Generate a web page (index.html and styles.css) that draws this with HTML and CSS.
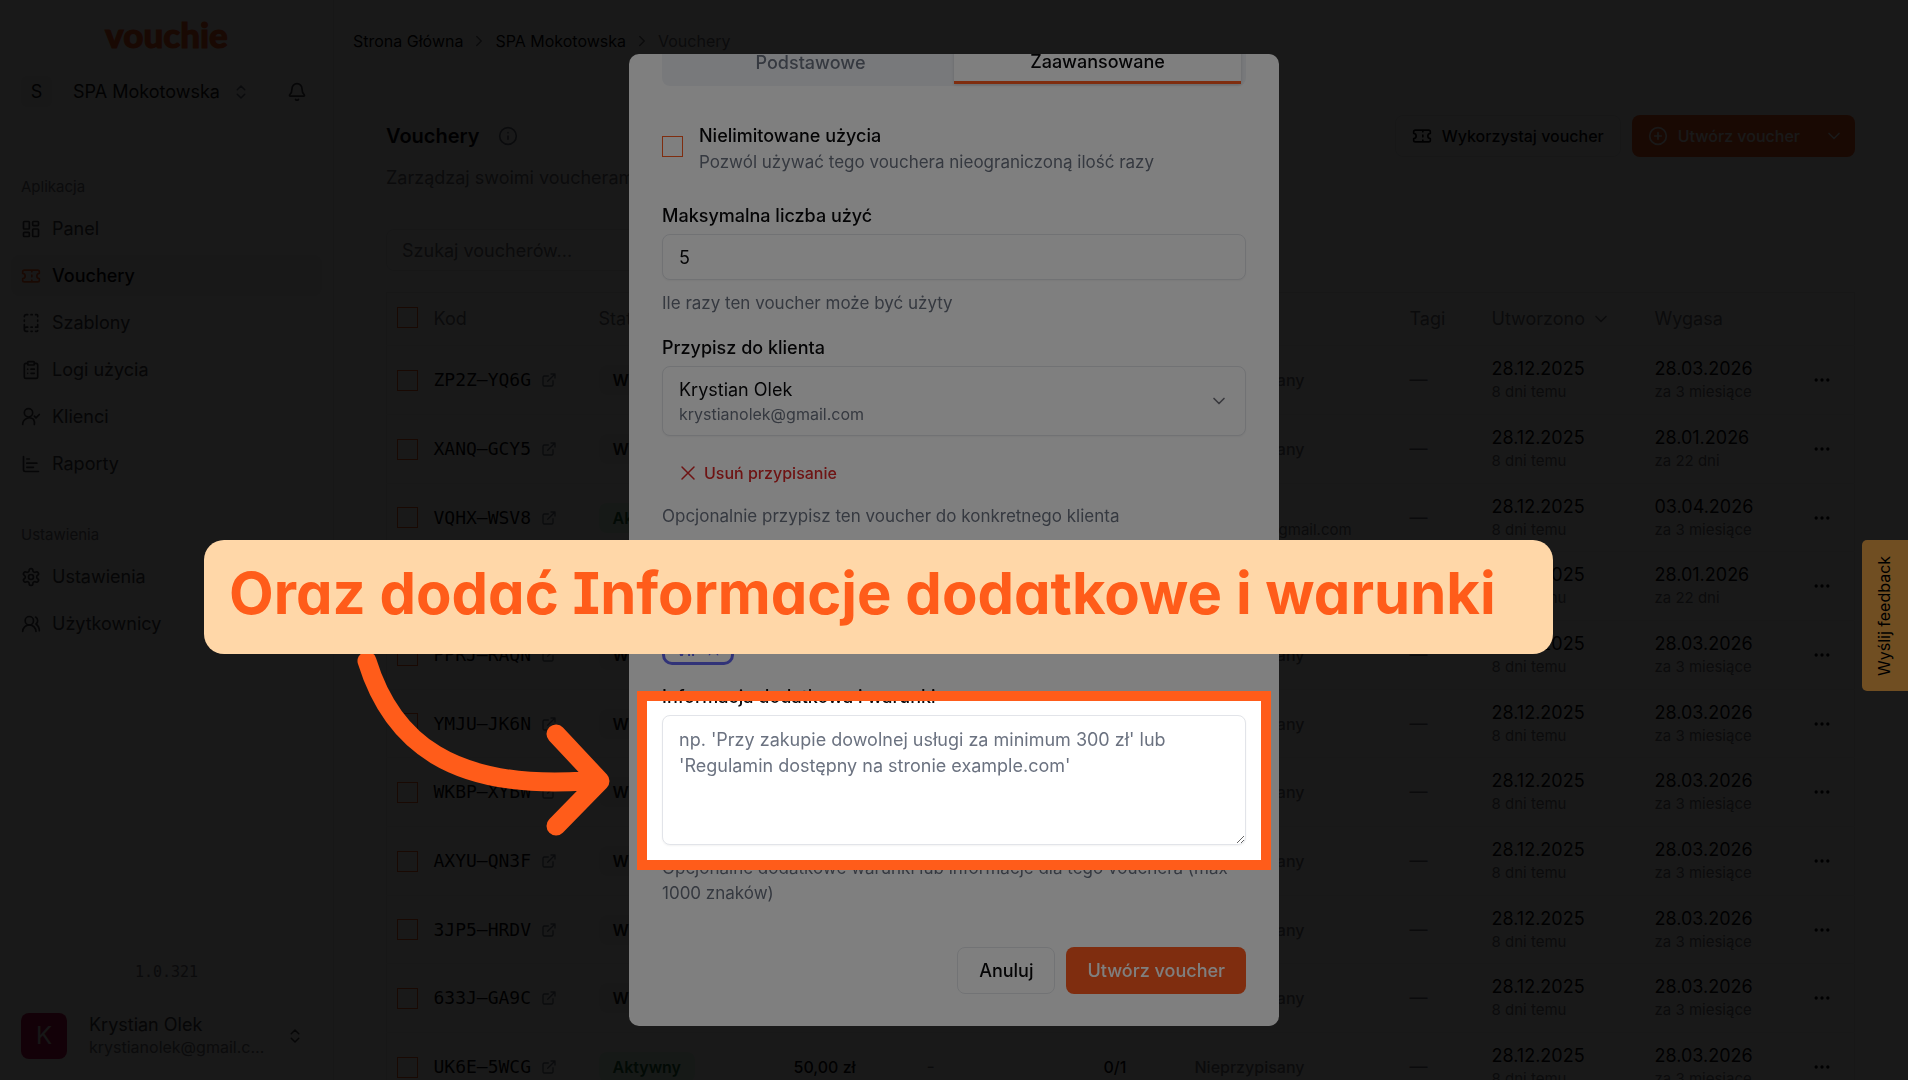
FILE: index.html
```html
<!DOCTYPE html>
<html lang="pl">
<head>
    <meta charset="UTF-8">
    <meta name="viewport" content="width=device-width, initial-scale=1.0">
    <title>Vouchery - Vouchie</title>
    <link rel="stylesheet" href="styles.css">
</head>
<body>
    <svg class="sprite" aria-hidden="true">
        <symbol id="i-updown" viewBox="0 0 24 24"><path d="m7 15 5 5 5-5M7 9l5-5 5 5"/></symbol>
        <symbol id="i-down" viewBox="0 0 24 24"><path d="m6 9 6 6 6-6"/></symbol>
        <symbol id="i-right" viewBox="0 0 24 24"><path d="m9 18 6-6-6-6"/></symbol>
        <symbol id="i-bell" viewBox="0 0 24 24"><path d="M10.3 21a2 2 0 0 0 3.4 0M3.3 15.3A1 1 0 0 0 4 17h16a1 1 0 0 0 .7-1.7C19.4 14 18 12.500 18 8A6 6 0 0 0 6 8c0 4.500-1.400 6-2.700 7.300"/></symbol>
        <symbol id="i-panel" viewBox="0 0 24 24"><rect x="3" y="3" width="7" height="9" rx="1"/><rect x="14" y="3" width="7" height="5" rx="1"/><rect x="14" y="12" width="7" height="9" rx="1"/><rect x="3" y="16" width="7" height="5" rx="1"/></symbol>
        <symbol id="i-ticket" viewBox="0 0 24 24"><path d="M2 9a3 3 0 0 1 0 6v2a2 2 0 0 0 2 2h16a2 2 0 0 0 2-2v-2a3 3 0 0 1 0-6V7a2 2 0 0 0-2-2H4a2 2 0 0 0-2 2ZM13 5v2M13 11v2M13 17v2"/></symbol>
        <symbol id="i-template" viewBox="0 0 24 24"><path d="M12 17h1.500M12 22h1.500M12 2h1.500M17.500 22H19a1 1 0 0 0 1-1M17.500 2H19a1 1 0 0 1 1 1v1.500M20 14v3h-2.500M20 8.500V10M4 10V8.500M4 19.500V14M4 4.500A2.500 2.500 0 0 1 6.500 2H8M8 22H6.500a2.500 2.500 0 0 1 0-5H8"/></symbol>
        <symbol id="i-log" viewBox="0 0 24 24"><rect x="8" y="2" width="8" height="4" rx="1"/><path d="M16 4h2a2 2 0 0 1 2 2v14a2 2 0 0 1-2 2H6a2 2 0 0 1-2-2V6a2 2 0 0 1 2-2h2M12 11h4M12 16h4M8 11h.01M8 16h.01"/></symbol>
        <symbol id="i-client" viewBox="0 0 24 24"><path d="M2 21a8 8 0 0 1 13.300-6M16 21a8 8 0 0 0-1-6"/><circle cx="9" cy="7" r="5"/><path d="m16 11 2 2 4-4"/></symbol>
        <symbol id="i-chart" viewBox="0 0 24 24"><path d="M3 3v16a2 2 0 0 0 2 2h16M7 16h8M7 11h12M7 6h3"/></symbol>
        <symbol id="i-gear" viewBox="0 0 24 24"><path d="M12.220 2h-.44a2 2 0 0 0-2 2v.18a2 2 0 0 1-1 1.730l-.43.25a2 2 0 0 1-2 0l-.15-.08a2 2 0 0 0-2.730.73l-.22.38a2 2 0 0 0 .73 2.730l.15.1a2 2 0 0 1 1 1.720v.51a2 2 0 0 1-1 1.740l-.15.09a2 2 0 0 0-.73 2.730l.22.38a2 2 0 0 0 2.730.73l.15-.08a2 2 0 0 1 2 0l.43.25a2 2 0 0 1 1 1.730V20a2 2 0 0 0 2 2h.44a2 2 0 0 0 2-2v-.18a2 2 0 0 1 1-1.730l.43-.25a2 2 0 0 1 2 0l.15.08a2 2 0 0 0 2.730-.73l.22-.39a2 2 0 0 0-.73-2.730l-.15-.08a2 2 0 0 1-1-1.740v-.5a2 2 0 0 1 1-1.740l.15-.09a2 2 0 0 0 .73-2.730l-.22-.38a2 2 0 0 0-2.730-.73l-.15.08a2 2 0 0 1-2 0l-.43-.25a2 2 0 0 1-1-1.730V4a2 2 0 0 0-2-2z"/><circle cx="12" cy="12" r="3"/></symbol>
        <symbol id="i-users" viewBox="0 0 24 24"><path d="M18 21a8 8 0 0 0-16 0"/><circle cx="10" cy="8" r="5"/><path d="M22 20c0-3.370-2-6.500-4-8a5 5 0 0 0-.45-8.300"/></symbol>
        <symbol id="i-info" viewBox="0 0 24 24"><circle cx="12" cy="12" r="10"/><path d="M12 16v-4M12 8h.01"/></symbol>
        <symbol id="i-plus" viewBox="0 0 24 24"><circle cx="12" cy="12" r="10"/><path d="M8 12h8M12 8v8"/></symbol>
        <symbol id="i-link" viewBox="0 0 24 24"><path d="M15 3h6v6M10 14 21 3M18 13v6a2 2 0 0 1-2 2H5a2 2 0 0 1-2-2V8a2 2 0 0 1 2-2h6"/></symbol>
        <symbol id="i-dots" viewBox="0 0 24 24"><circle cx="12" cy="12" r="1"/><circle cx="19" cy="12" r="1"/><circle cx="5" cy="12" r="1"/></symbol>
        <symbol id="i-x" viewBox="0 0 24 24"><path d="M20 4 4 20M4 4l16 16"/></symbol>
    </svg>

    <div class="app">
        <aside class="sidebar">
            <a href="#" class="logo">vouchie</a>
            <div class="workspace">
                <button type="button" class="workspace-btn">
                    <span class="workspace-letter">S</span>
                    <span>SPA Mokotowska</span>
                    <svg class="icon small faint"><use href="#i-updown"/></svg>
                </button>
                <button type="button" class="bell" aria-label="Powiadomienia"><svg class="icon"><use href="#i-bell"/></svg></button>
            </div>
            <nav>
                <p class="nav-title">Aplikacja</p>
                <a href="#"><svg class="icon"><use href="#i-panel"/></svg>Panel</a>
                <a href="#" class="active"><svg class="icon"><use href="#i-ticket"/></svg>Vouchery</a>
                <a href="#"><svg class="icon"><use href="#i-template"/></svg>Szablony</a>
                <a href="#"><svg class="icon"><use href="#i-log"/></svg>Logi użycia</a>
                <a href="#"><svg class="icon"><use href="#i-client"/></svg>Klienci</a>
                <a href="#"><svg class="icon"><use href="#i-chart"/></svg>Raporty</a>
                <p class="nav-title second">Ustawienia</p>
                <a href="#"><svg class="icon"><use href="#i-gear"/></svg>Ustawienia</a>
                <a href="#"><svg class="icon"><use href="#i-users"/></svg>Użytkownicy</a>
            </nav>
            <p class="version">1.0.321</p>
            <button type="button" class="user">
                <span class="avatar">K</span>
                <span class="user-text">
                    <span class="user-name">Krystian Olek</span>
                    <span class="user-mail">krystianolek@gmail.com</span>
                </span>
                <svg class="icon small"><use href="#i-updown"/></svg>
            </button>
        </aside>

        <div class="page">
            <div class="breadcrumbs">
                <a href="#">Strona Główna</a>
                <svg class="icon small"><use href="#i-right"/></svg>
                <a href="#">SPA Mokotowska</a>
                <svg class="icon small"><use href="#i-right"/></svg>
                <span>Vouchery</span>
            </div>
            <main>
                <div class="page-head">
                    <div class="page-title">
                        <h1>Vouchery</h1>
                        <svg class="icon muted"><use href="#i-info"/></svg>
                    </div>
                    <div class="page-actions">
                        <button type="button" class="btn outline"><svg class="icon"><use href="#i-ticket"/></svg>Wykorzystaj voucher</button>
                        <button type="button" class="btn primary"><svg class="icon"><use href="#i-plus"/></svg>Utwórz voucher<svg class="icon end"><use href="#i-down"/></svg></button>
                    </div>
                </div>
                <p class="subtitle">Zarządzaj swoimi voucherami</p>
                <input type="text" class="search" placeholder="Szukaj voucherów..." aria-label="Szukaj voucherów">

                <table>
                    <colgroup>
                        <col class="c-check"><col class="c-code"><col class="c-status"><col class="c-value"><col class="c-left"><col class="c-used"><col class="c-client"><col class="c-tags"><col class="c-created"><col class="c-expires"><col class="c-more">
                    </colgroup>
                    <thead>
                        <tr>
                            <th><input type="checkbox" aria-label="Zaznacz wszystkie"></th>
                            <th>Kod</th><th>Status</th><th>Wartość</th><th>Pozostało</th><th>Użycia</th><th>Klient</th><th>Tagi</th>
                            <th><span class="sort">Utworzono <svg class="icon"><use href="#i-down"/></svg></span></th>
                            <th>Wygasa</th><th></th>
                        </tr>
                    </thead>
                    <tbody>
                        <tr>
                            <td><input type="checkbox" aria-label="ZP2Z–YQ6G"></td>
                            <td><a href="#" class="code">ZP2Z–YQ6G <svg class="icon link"><use href="#i-link"/></svg></a></td>
                            <td><span class="badge">Wysłany</span></td><td class="strong">50,00 zł</td><td>-</td><td class="strong">0/1</td><td class="none">Nieprzypisany</td><td>—</td>
                            <td><b>28.12.2025</b><small>8 dni temu</small></td><td><b>28.03.2026</b><small>za 3 miesiące</small></td>
                            <td><button type="button" class="more" aria-label="Więcej"><svg class="icon"><use href="#i-dots"/></svg></button></td>
                        </tr>
                        <tr>
                            <td><input type="checkbox" aria-label="XANQ–GCY5"></td>
                            <td><a href="#" class="code">XANQ–GCY5 <svg class="icon link"><use href="#i-link"/></svg></a></td>
                            <td><span class="badge">Wysłany</span></td><td class="strong">50,00 zł</td><td>-</td><td class="strong">0/1</td><td class="none">Nieprzypisany</td><td>—</td>
                            <td><b>28.12.2025</b><small>8 dni temu</small></td><td><b>28.01.2026</b><small>za 22 dni</small></td>
                            <td><button type="button" class="more" aria-label="Więcej"><svg class="icon"><use href="#i-dots"/></svg></button></td>
                        </tr>
                        <tr>
                            <td><input type="checkbox" aria-label="VQHX–WSV8"></td>
                            <td><a href="#" class="code">VQHX–WSV8 <svg class="icon link"><use href="#i-link"/></svg></a></td>
                            <td><span class="badge green">Aktywny</span></td><td class="strong">50,00 zł</td><td>-</td><td class="strong">0/1</td><td><b>Krystian</b><small>krystian.o@gmail.com</small></td><td>—</td>
                            <td><b>28.12.2025</b><small>8 dni temu</small></td><td><b>03.04.2026</b><small>za 3 miesiące</small></td>
                            <td><button type="button" class="more" aria-label="Więcej"><svg class="icon"><use href="#i-dots"/></svg></button></td>
                        </tr>
                        <tr>
                            <td><input type="checkbox" aria-label="HT4M–LQ7D"></td>
                            <td><a href="#" class="code">HT4M–LQ7D <svg class="icon link"><use href="#i-link"/></svg></a></td>
                            <td><span class="badge">Wysłany</span></td><td class="strong">50,00 zł</td><td>-</td><td class="strong">0/1</td><td class="none">Nieprzypisany</td><td>—</td>
                            <td><b>28.12.2025</b><small>8 dni temu</small></td><td><b>28.01.2026</b><small>za 22 dni</small></td>
                            <td><button type="button" class="more" aria-label="Więcej"><svg class="icon"><use href="#i-dots"/></svg></button></td>
                        </tr>
                        <tr>
                            <td><input type="checkbox" aria-label="PPRJ–RAQN"></td>
                            <td><a href="#" class="code">PPRJ–RAQN <svg class="icon link"><use href="#i-link"/></svg></a></td>
                            <td><span class="badge">Wysłany</span></td><td class="strong">50,00 zł</td><td>-</td><td class="strong">0/1</td><td class="none">Nieprzypisany</td><td>—</td>
                            <td><b>28.12.2025</b><small>8 dni temu</small></td><td><b>28.03.2026</b><small>za 3 miesiące</small></td>
                            <td><button type="button" class="more" aria-label="Więcej"><svg class="icon"><use href="#i-dots"/></svg></button></td>
                        </tr>
                        <tr>
                            <td><input type="checkbox" aria-label="YMJU–JK6N"></td>
                            <td><a href="#" class="code">YMJU–JK6N <svg class="icon link"><use href="#i-link"/></svg></a></td>
                            <td><span class="badge">Wysłany</span></td><td class="strong">50,00 zł</td><td>-</td><td class="strong">0/1</td><td class="none">Nieprzypisany</td><td>—</td>
                            <td><b>28.12.2025</b><small>8 dni temu</small></td><td><b>28.03.2026</b><small>za 3 miesiące</small></td>
                            <td><button type="button" class="more" aria-label="Więcej"><svg class="icon"><use href="#i-dots"/></svg></button></td>
                        </tr>
                        <tr>
                            <td><input type="checkbox" aria-label="WKBP–XYBW"></td>
                            <td><a href="#" class="code">WKBP–XYBW <svg class="icon link"><use href="#i-link"/></svg></a></td>
                            <td><span class="badge">Wysłany</span></td><td class="strong">50,00 zł</td><td>-</td><td class="strong">0/1</td><td class="none">Nieprzypisany</td><td>—</td>
                            <td><b>28.12.2025</b><small>8 dni temu</small></td><td><b>28.03.2026</b><small>za 3 miesiące</small></td>
                            <td><button type="button" class="more" aria-label="Więcej"><svg class="icon"><use href="#i-dots"/></svg></button></td>
                        </tr>
                        <tr>
                            <td><input type="checkbox" aria-label="AXYU–QN3F"></td>
                            <td><a href="#" class="code">AXYU–QN3F <svg class="icon link"><use href="#i-link"/></svg></a></td>
                            <td><span class="badge">Wysłany</span></td><td class="strong">50,00 zł</td><td>-</td><td class="strong">0/1</td><td class="none">Nieprzypisany</td><td>—</td>
                            <td><b>28.12.2025</b><small>8 dni temu</small></td><td><b>28.03.2026</b><small>za 3 miesiące</small></td>
                            <td><button type="button" class="more" aria-label="Więcej"><svg class="icon"><use href="#i-dots"/></svg></button></td>
                        </tr>
                        <tr>
                            <td><input type="checkbox" aria-label="3JP5–HRDV"></td>
                            <td><a href="#" class="code">3JP5–HRDV <svg class="icon link"><use href="#i-link"/></svg></a></td>
                            <td><span class="badge">Wysłany</span></td><td class="strong">50,00 zł</td><td>-</td><td class="strong">0/1</td><td class="none">Nieprzypisany</td><td>—</td>
                            <td><b>28.12.2025</b><small>8 dni temu</small></td><td><b>28.03.2026</b><small>za 3 miesiące</small></td>
                            <td><button type="button" class="more" aria-label="Więcej"><svg class="icon"><use href="#i-dots"/></svg></button></td>
                        </tr>
                        <tr>
                            <td><input type="checkbox" aria-label="633J–GA9C"></td>
                            <td><a href="#" class="code">633J–GA9C <svg class="icon link"><use href="#i-link"/></svg></a></td>
                            <td><span class="badge">Wysłany</span></td><td class="strong">50,00 zł</td><td>-</td><td class="strong">0/1</td><td class="none">Nieprzypisany</td><td>—</td>
                            <td><b>28.12.2025</b><small>8 dni temu</small></td><td><b>28.03.2026</b><small>za 3 miesiące</small></td>
                            <td><button type="button" class="more" aria-label="Więcej"><svg class="icon"><use href="#i-dots"/></svg></button></td>
                        </tr>
                        <tr>
                            <td><input type="checkbox" aria-label="UK6E–5WCG"></td>
                            <td><a href="#" class="code">UK6E–5WCG <svg class="icon link"><use href="#i-link"/></svg></a></td>
                            <td><span class="badge green">Aktywny</span></td><td class="strong">50,00 zł</td><td>-</td><td class="strong">0/1</td><td class="none">Nieprzypisany</td><td>—</td>
                            <td><b>28.12.2025</b><small>8 dni temu</small></td><td><b>28.03.2026</b><small>za 3 miesiące</small></td>
                            <td><button type="button" class="more" aria-label="Więcej"><svg class="icon"><use href="#i-dots"/></svg></button></td>
                        </tr>
                    </tbody>
                </table>
            </main>
        </div>
    </div>

    <div class="backdrop">
        <form class="dialog" role="dialog" aria-label="Utwórz voucher">
            <div class="tabs">
                <button type="button">Podstawowe</button>
                <button type="button" class="selected">Zaawansowane</button>
            </div>

            <div class="check-row">
                <input type="checkbox" id="unlimited">
                <div>
                    <label for="unlimited">Nielimitowane użycia</label>
                    <p class="help">Pozwól używać tego vouchera nieograniczoną ilość razy</p>
                </div>
            </div>

            <div class="field">
                <label for="max">Maksymalna liczba użyć</label>
                <input type="text" id="max" class="control" value="5">
                <p class="help">Ile razy ten voucher może być użyty</p>
            </div>

            <div class="field">
                <label for="client">Przypisz do klienta</label>
                <div class="client">
                    <select id="client" class="control">
                        <option>Krystian Olek</option>
                    </select>
                    <span class="client-mail">krystianolek@gmail.com</span>
                    <svg class="icon"><use href="#i-down"/></svg>
                </div>
                <button type="button" class="unassign"><svg class="icon small"><use href="#i-x"/></svg>Usuń przypisanie</button>
                <p class="help">Opcjonalnie przypisz ten voucher do konkretnego klienta</p>
            </div>

            <div class="field">
                <label for="tags">Tagi</label>
                <input type="text" id="tags" class="control">
                <button type="button" class="chip">VIP <svg class="icon tiny"><use href="#i-x"/></svg></button>
            </div>

            <div class="field">
                <label for="terms">Informacja dodatkowa i warunki</label>
                <textarea id="terms" class="control" placeholder="np. 'Przy zakupie dowolnej usługi za minimum 300 zł' lub 'Regulamin dostępny na stronie example.com'"></textarea>
                <p class="help">Opcjonalne dodatkowe warunki lub informacje dla tego vouchera (max 1000 znaków)</p>
            </div>

            <div class="dialog-actions">
                <button type="button" class="btn outline">Anuluj</button>
                <button type="submit" class="btn primary">Utwórz voucher</button>
            </div>
        </form>
    </div>

    <button type="button" class="feedback">Wyślij feedback</button>

    <!-- tutorial step -->
    <div class="tour">
        <div class="spotlight"></div>
        <svg class="arrow" viewBox="0 0 270 200">
            <path d="M17 17C42 98 102 146 235 137L250 137M206 90L250 137L206 182"/>
        </svg>
        <p class="callout">Oraz dodać Informacje dodatkowe i warunki</p>
    </div>
</body>
</html>
```
FILE: styles.css
```css
* {
    margin: 0;
    padding: 0;
    box-sizing: border-box;
}
body {
    font-family: Inter, "Liberation Sans", sans-serif;
    font-size: 18px;
    line-height: 24px;
    color: #09090b;
    background: #fff;
    height: 100vh;
    overflow: hidden;
}
button,
input,
select,
textarea {
    font: inherit;
    color: inherit;
}
button {
    background: none;
    border: none;
    cursor: pointer;
}
a {
    color: inherit;
    text-decoration: none;
}
.sprite {
    display: none;
}
.icon {
    width: 20px;
    height: 20px;
    flex-shrink: 0;
    fill: none;
    stroke: currentColor;
    stroke-width: 2;
    stroke-linecap: round;
    stroke-linejoin: round;
}
.icon.small {
    width: 18px;
    height: 18px;
}
.icon.tiny {
    width: 13px;
    height: 13px;
}
.icon.link {
    width: 16px;
    height: 16px;
    color: #6b7280;
}
.muted,
.faint {
    color: #6b7280;
}
input[type="checkbox"] {
    appearance: none;
    display: block;
    flex-shrink: 0;
    width: 21px;
    height: 21px;
    border: 1px solid #ff5a1f;
}

.app {
    display: flex;
    height: 100vh;
}

/* sidebar */
.sidebar {
    display: flex;
    flex-direction: column;
    width: 334px;
    flex-shrink: 0;
    padding: 14px 11px 21px;
    border-right: 1px solid #e5e7eb;
    background: #fafafa;
    color: #3f3f46;
}
.logo {
    align-self: center;
    font-family: Lato, sans-serif;
    font-weight: 900;
    font-size: 35px;
    line-height: 40px;
    color: #ff5a1f;
    -webkit-text-stroke: 1px #ff5a1f;
}
.workspace {
    display: flex;
    align-items: center;
    justify-content: space-between;
    margin-top: 22px;
    padding: 0 15px 0 10px;
}
.workspace-btn {
    display: flex;
    align-items: center;
    gap: 12px;
    color: #18181b;
}
.workspace-letter {
    width: 31px;
    margin-right: 9px;
    border-radius: 6px;
    line-height: 31px;
    background: #f1f1f3;
}
.bell {
    height: 20px;
}
nav {
    display: flex;
    flex-direction: column;
    gap: 6px;
    margin-top: 68px;
}
nav a {
    display: flex;
    align-items: center;
    gap: 11px;
    height: 41px;
    padding: 0 10px;
    border-radius: 8px;
}
nav a.active {
    background: #f4f4f5;
    color: #09090b;
    font-weight: 500;
}
nav a.active .icon {
    color: #ff5a1f;
}
.nav-title {
    padding: 0 10px 3px;
    font-size: 15px;
    color: #71717a;
}
.nav-title.second {
    margin-top: 33px;
}
.version {
    margin-top: auto;
    text-align: center;
    font-family: "DejaVu Sans Mono", monospace;
    font-size: 15px;
    color: #71717a;
}
.user {
    display: flex;
    align-items: center;
    margin-top: 24px;
    padding: 5px 18px 0 10px;
    text-align: left;
}
.avatar {
    width: 46px;
    border-radius: 8px;
    background: #be0f4f;
    color: #e4e4e7;
    font-size: 24px;
    line-height: 46px;
    text-align: center;
}
.user-text {
    width: 178px;
    margin: 0 auto 0 22px;
}
.user-name,
.user-mail {
    display: block;
    line-height: 23px;
    overflow: hidden;
    text-overflow: ellipsis;
    white-space: nowrap;
}
.user-mail {
    font-size: 16px;
    color: #71717a;
}

/* vouchers page */
.page {
    flex: 1;
    min-width: 0;
}
.breadcrumbs {
    display: flex;
    align-items: center;
    gap: 7px;
    height: 82px;
    padding: 0 19px;
    font-size: 16px;
}
.breadcrumbs span,
.breadcrumbs .icon {
    color: #71717a;
}
main {
    padding: 33px 53px 0 52px;
}
.page-head {
    display: flex;
    align-items: center;
    justify-content: space-between;
}
.page-title {
    display: flex;
    align-items: center;
    gap: 18px;
}
h1 {
    font-size: 20px;
    font-weight: 600;
}
.page-actions {
    display: flex;
    gap: 11px;
}
.btn {
    display: flex;
    align-items: center;
    gap: 11px;
    height: 42px;
    padding: 0 16px;
    border-radius: 8px;
    font-weight: 500;
}
.btn.outline {
    border: 1px solid #e5e7eb;
}
.btn.primary {
    background: #ff5a1f;
    color: #fff;
}
.page-actions .btn {
    gap: 10px;
    font-size: 16px;
}
.page-actions .primary {
    padding-right: 11px;
}
.btn .end {
    margin-left: 14px;
}
.subtitle {
    margin-top: 9px;
    color: #71717a;
}
.search {
    display: block;
    width: 480px;
    height: 42px;
    margin-top: 39px;
    padding: 0 15px;
    border: 1px solid #e5e7eb;
    border-radius: 8px;
}
.search::placeholder {
    color: #71717a;
}
table {
    width: 100%;
    margin-top: 21px;
    table-layout: fixed;
    border-collapse: collapse;
    border: 1px solid #e5e7eb;
}
.c-check { width: 37px; }
.c-code { width: 165px; }
.c-status { width: 195px; }
.c-value { width: 133px; }
.c-left { width: 177px; }
.c-used { width: 91px; }
.c-tags { width: 82px; }
.c-created { width: 163px; }
.c-expires { width: 157px; }
.c-more { width: 53px; }
th {
    height: 53px;
    padding: 0 10px;
    text-align: left;
    font-weight: 400;
    color: #71717a;
    white-space: nowrap;
}
th input {
    margin-bottom: 4px;
}
td {
    height: 69px;
    padding: 0 10px;
    border-top: 1px solid #f1f1f3;
    color: #71717a;
    white-space: nowrap;
}
tr:nth-child(3n) td {
    height: 68px;
}
td b,
td small {
    display: block;
    font-weight: 400;
    line-height: 23px;
}
td b {
    color: #09090b;
}
td small {
    font-size: 15px;
}
td.strong,
td.none {
    font-size: 16px;
    font-weight: 500;
}
td.strong {
    color: #09090b;
}
.sort,
.code {
    display: flex;
    align-items: center;
    gap: 6px;
}
.code {
    gap: 10px;
    font-family: "DejaVu Sans Mono", monospace;
    color: #09090b;
}
.badge {
    display: inline-block;
    padding: 3px 14px;
    border-radius: 8px;
    background: #f4f4f5;
    color: #18181b;
    font-size: 16px;
    font-weight: 600;
}
.badge.green {
    background: #dcfce7;
    color: #166534;
}
.more {
    display: flex;
    color: #09090b;
}

/* dialog */
.backdrop {
    position: fixed;
    inset: 0;
    display: flex;
    align-items: center;
    justify-content: center;
    background: rgba(0, 0, 0, 0.8);
}
/* scrolled to the bottom, the top of the form is cut off */
.dialog {
    display: flex;
    flex-direction: column;
    justify-content: flex-end;
    gap: 20px;
    width: 650px;
    height: 90vh;
    padding: 0 33px 32px;
    overflow: hidden;
    border-radius: 10px;
    background: #fff;
}
.dialog > * {
    flex-shrink: 0;
}
.tabs {
    display: flex;
    padding: 5px 5px 2px;
    border-radius: 8px;
    background: #f1f3f7;
}
.tabs button {
    flex: 1;
    height: 46px;
    padding-top: 4px;
    color: #6b7280;
    font-weight: 500;
}
.tabs .selected {
    background: #fff;
    color: #09090b;
    border-bottom: 3px solid #ff5a1f;
    box-shadow: 0 1px 3px rgba(0, 0, 0, 0.15);
}
.dialog label {
    font-weight: 500;
}
.help {
    font-size: 17px;
    line-height: 25px;
    color: #6b7280;
}
.check-row {
    display: flex;
    align-items: center;
    gap: 16px;
    margin: 18px 0 9px;
}
.check-row input {
    margin-bottom: 6px;
}
.check-row .help {
    margin-top: 2px;
}
.field {
    display: flex;
    flex-direction: column;
    gap: 6px;
}
.field .help {
    margin-top: 5px;
}
.control {
    width: 100%;
    height: 46px;
    padding: 0 16px;
    border: 1px solid #e2e4e9;
    border-radius: 8px;
    background: #fff;
    box-shadow: 0 1px 2px rgba(0, 0, 0, 0.05);
}
textarea.control {
    display: block;
    height: 130px;
    padding: 11px 16px;
    line-height: 26px;
}
textarea::placeholder {
    color: #6b7280;
}
.client {
    position: relative;
}
.client select {
    display: block;
    height: 70px;
    padding: 0 16px 22px;
    appearance: none;
}
.client-mail {
    position: absolute;
    left: 17px;
    bottom: 10px;
    font-size: 16px;
    color: #6b7280;
}
.client .icon {
    position: absolute;
    right: 17px;
    top: 25px;
    color: #71717a;
}
.unassign {
    display: flex;
    align-items: center;
    align-self: flex-start;
    gap: 7px;
    height: 41px;
    margin-top: 10px;
    padding: 0 17px;
    font-size: 16px;
    font-weight: 500;
    color: #dc2626;
}
.chip {
    display: flex;
    align-items: center;
    align-self: flex-start;
    gap: 6px;
    height: 32px;
    margin-top: 2px;
    padding: 3px 11px 0;
    border: 3px solid #6366f1;
    border-radius: 10px;
    font-size: 15px;
    font-weight: 600;
    color: #6366f1;
}
.dialog-actions {
    display: flex;
    justify-content: flex-end;
    gap: 11px;
    margin-top: 21px;
}
.dialog-actions .btn {
    height: 47px;
    padding: 0 21px;
}
.feedback {
    position: fixed;
    right: 0;
    top: 50%;
    width: 46px;
    height: 151px;
    padding-left: 2px;
    border-radius: 0 5px 5px 0;
    background: #e09c44;
    color: #000;
    font-size: 16px;
    writing-mode: vertical-rl;
    transform: rotate(180deg);
}

/* tutorial overlay */
.tour {
    position: fixed;
    inset: 0;
    overflow: hidden;
}
.spotlight {
    position: absolute;
    left: 637px;
    top: 691px;
    width: 634px;
    height: 179px;
    border: 10px solid #ff5c1a;
    box-shadow: 0 0 0 2000px rgba(0, 0, 0, 0.5);
}
.arrow {
    position: absolute;
    left: 350px;
    top: 644px;
    width: 270px;
    height: 200px;
    fill: none;
    stroke: #ff5c1a;
    stroke-width: 19;
    stroke-linecap: round;
    stroke-linejoin: round;
}
.callout {
    position: absolute;
    left: 204px;
    top: 540px;
    width: 1349px;
    padding: 23px 25px 31px;
    border-radius: 20px;
    background: #ffd7a8;
    color: #ff5c1a;
    font-size: 58px;
    font-weight: 700;
    line-height: 60px;
    white-space: nowrap;
    font-feature-settings: "cv08", "cv11", "ss03";
}
```
